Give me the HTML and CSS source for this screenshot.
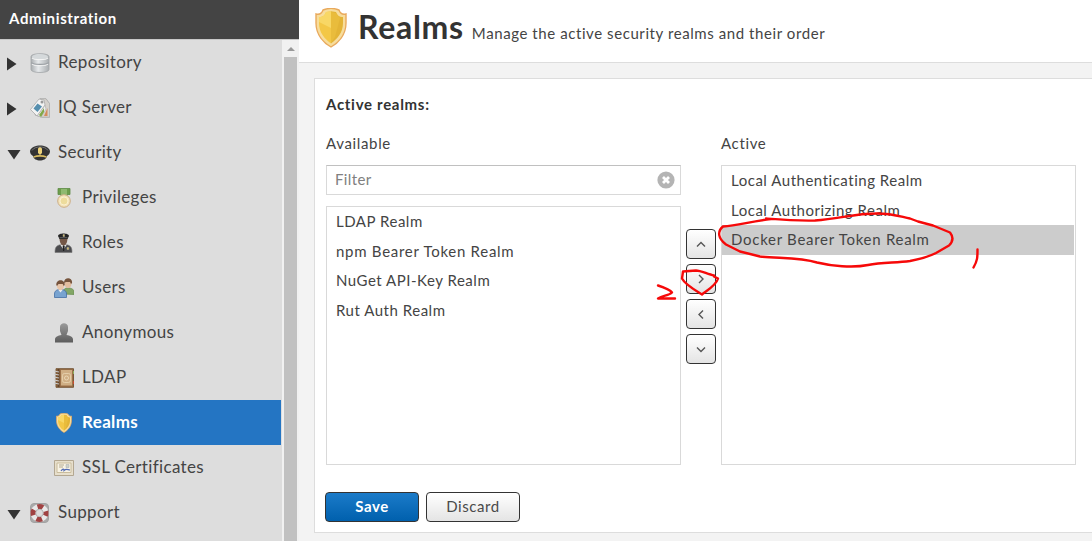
FILE: index.html
```html
<!DOCTYPE html>
<html lang="en">
<head>
<meta charset="utf-8">
<title>Realms</title>
<link rel="stylesheet" href="styles.css">
</head>
<body>
<svg class="defs" width="0" height="0" aria-hidden="true">
  <defs>
    <linearGradient id="metal" x1="0" x2="1"><stop offset="0" stop-color="#a9adb0"/><stop offset=".4" stop-color="#e6e9eb"/><stop offset="1" stop-color="#a9adb0"/></linearGradient>
    <linearGradient id="grey" x1="0" x2="0" y1="0" y2="1"><stop offset="0" stop-color="#9a9a9a"/><stop offset="1" stop-color="#5c5c5c"/></linearGradient>
    <symbol id="shield" viewBox="0 0 32 40">
      <path d="M16 39C9 35 1 27 1 15V6c4 1 6-1 7-4 5-2 11-2 16 0 1 3 3 5 7 4v9c0 12-8 20-15 24z" fill="#f7dd9c" stroke="#e9a95c" stroke-width="1.4"/>
      <path d="M16 35.500C10 31 4 25 4 15V9c4 0 6-2 7-5l5-.7z" fill="#f3c746"/>
      <path d="M16 35.500c6-4.500 12-10.500 12-20.500V9c-4 0-6-2-7-5l-5-.7z" fill="#e3b436"/>
      <path d="M16 3.300V20L4 14V9c4 0 6-2 7-5z" fill="#f8d765"/>
      <path d="M16 35V4l5 1 4 5-5 19z" fill="#e9bc3c"/>
    </symbol>
  </defs>
</svg>
<div class="app">
  <aside class="sidebar">
    <div class="sidebar-head">Administration</div>
    <div class="sidebar-body">
      <nav class="tree">
        <div class="node"><svg class="arrow" viewBox="0 0 14 14"><path d="M0 .5 9.500 7 0 13.500z"/></svg>
          <svg class="icon" viewBox="0 0 20 20"><path d="M1 3.500C1-.3 19-.3 19 3.500v13c0 4-18 4-18 0z" fill="url(#metal)" stroke="#a2a6a8" stroke-width=".8"/><ellipse cx="10" cy="3.700" rx="8" ry="2.500" fill="#d5d9db"/><path d="M1.500 9.500c1.500 2.400 15.500 2.400 17 0" fill="none" stroke="#9a9fa3" stroke-width="1.200"/><path d="M2 11c2 2.400 14 2.400 16 0M2 4.800c2 2.300 14 2.300 16 0" fill="none" stroke="#f4f4f4" stroke-width="1.100"/></svg>
          <span>Repository</span></div>
        <div class="node"><svg class="arrow" viewBox="0 0 14 14"><path d="M0 .5 9.500 7 0 13.500z"/></svg>
          <svg class="icon" viewBox="0 0 20 20"><path d="M10 .7h6l3.700 5v13.600h-8L5 17z" fill="#d5d1cc" stroke="#a5a5a5" stroke-width=".8"/><path d="M14 18l3.500-8v8z" fill="#d58a5b"/><path d="M7 17.500 15 7l1 4-5 8z" fill="#eee" stroke="#aaa" stroke-width=".6"/><path d="m9 17 5-7v4l-3 5z" fill="#82a948"/><path d="M.5 11.500 9 1l5 1 1 5-8 11z" fill="#f3f3f3" stroke="#aaa" stroke-width=".8"/><path d="m3.500 10.500 4-5 4.500 3-4.500 5.500z" fill="#568fae"/><circle cx="12" cy="4" r="1.500" fill="#999"/></svg>
          <span>IQ Server</span></div>
        <div class="node"><svg class="arrow" viewBox="0 0 14 14"><path d="M.5 3h13L7 12.500z"/></svg>
          <svg class="icon" viewBox="0 0 20 20"><path d="M0 8C1 4 6 2.500 10 2.500S19 4 20 8c0 2-1 4-3 5-1 6-13 6-14 0C1 12 0 10 0 8z" fill="#333"/><path d="M2 7.500C4 4.500 7 4 10 4s6 .5 8 3.500" fill="none" stroke="#777" stroke-width="1"/><path d="M3.500 13.300c4-1.600 9-1.600 13 0v1.500c-4-1.500-9-1.500-13 0z" fill="#d9bd60"/><path d="M8 5.500 10 4l2 1.500v4.500L10 12l-2-2z" fill="#ecd27a"/></svg>
          <span>Security</span></div>
        <div class="node child"><svg class="icon" viewBox="0 0 20 20"><path d="M4 .5h12v6h-3v3H7v-3H4z" fill="#6c9d4b" stroke="#5e8c45" stroke-width=".8"/><path d="M7 1h6v6H7z" fill="#8fb970"/><circle cx="10" cy="13" r="6.300" fill="#f3e3b8" stroke="#cdae87"/><circle cx="10" cy="13" r="4" fill="#eddc9c" stroke="#faf0d1"/></svg>
          <span>Privileges</span></div>
        <div class="node child"><svg class="icon" viewBox="0 0 20 20"><path d="M1 19.500c0-5 1-7 6-8h5c5 1 6 3 6 8z" fill="#4b4b4e" stroke="#777" stroke-width=".6"/><path d="m6 11.500 3.500 5 3.500-5z" fill="#e8e8e8"/><path d="m8.700 13 1-1 1 1-.5 5H9z" fill="#222"/><path d="M5.500 5h8c0 4-1.500 7.500-4 7.500S5.500 9 5.500 5z" fill="#745747"/><path d="M4 3c0-3.500 11-3.500 11 0l-1.500 3h-8z" fill="#252525"/><path d="M5.500 4.700h8M9 1.500h1.500v2H9zM13 14.500h1.800v2H13z" fill="#d8bb54" stroke="#bbb" stroke-width=".4"/></svg>
          <span>Roles</span></div>
        <div class="node child"><svg class="icon" viewBox="0 0 20 20"><path d="M9 16c0-5 2-6 5-6s6 1 6 4v2.500z" fill="#83a766" stroke="#658b4d" stroke-width=".7"/><ellipse cx="14" cy="5.500" rx="3.500" ry="4.700" fill="#e2bd9f"/><path d="M10 5c-.5-6.500 9-6.500 8 0l-1 1-1-2h-4z" fill="#75533c"/><path d="M.5 19.500V16c0-3 2-4.500 6-4.500s6 1.500 6 4.500v3.500z" fill="#78a3d0" stroke="#426fa4" stroke-width=".8"/><path d="m4 11.500 2.500 3 2.500-3z" fill="#eee"/><ellipse cx="6.500" cy="7.500" rx="3.700" ry="4.700" fill="#e8c5a9"/><path d="M2.300 7c-.5-6.500 9-6.500 8.400 0l-1 1-1-2H4.500L3 8z" fill="#75533c"/></svg>
          <span>Users</span></div>
        <div class="node child"><svg class="icon" viewBox="0 0 20 20"><path d="M1 19.500v-3c0-3 3-3.700 6.500-4.500L6 8V4c0-5 8-5 8 0v4l-1.500 4c3.500.8 6.500 1.500 6.500 4.500v3z" fill="url(#grey)"/></svg>
          <span>Anonymous</span></div>
        <div class="node child"><svg class="icon" viewBox="0 0 20 20"><path d="M2 .7h17.500v18.600H2z" fill="#9b7048" stroke="#70502f" stroke-width=".9"/><path d="M7 2h11v15.500H7z" fill="#cfae84"/><path d="M4.500 1v18" stroke="#60452d" stroke-width="2"/><path d="M0 3l5 1M0 6l5 1M0 9l5 1M0 12l5 1M0 15l5 1" stroke="#ccc" stroke-width="1"/><rect x="8.500" y="5.500" width="8" height="9" rx="2" fill="none" stroke="#ead6b4" stroke-width=".8"/><circle cx="12.500" cy="10" r="2" fill="none" stroke="#ead6b4"/><path d="M19.500 3v3" stroke="#8db05d"/><path d="M19.500 13v3" stroke="#c94a2e"/></svg>
          <span>LDAP</span></div>
        <div class="node child selected"><svg class="icon shield-small"><use href="#shield"/></svg>
          <span>Realms</span></div>
        <div class="node child"><svg class="icon" viewBox="0 0 20 20"><path d="M.5 2.500h19v15H.5z" fill="#e7dfcc" stroke="#b3a791"/><path d="M3 5h14v9.500H3z" fill="#f8f3e5" stroke="#c9bc9d"/><path d="M5 7h5M5 9h4" stroke="#b4aa90"/><path d="M12 6.500h3v3h-3z" fill="#cbd2cc" stroke="#aaa" stroke-width=".5"/><path d="M7 13c2-3 3-2 3-.5 2-2 3-1 6-.5" fill="none" stroke="#526bb5" stroke-width="1.200"/></svg>
          <span>SSL Certificates</span></div>
        <div class="node"><svg class="arrow" viewBox="0 0 14 14"><path d="M.5 3h13L7 12.500z"/></svg>
          <svg class="icon" viewBox="0 0 20 20"><rect x=".5" y=".5" width="18" height="19" rx="3.500" fill="#aaa" stroke="#a2a2a2"/><circle cx="9.500" cy="10" r="6.500" fill="none" stroke="#e9e9e9" stroke-width="5"/><circle cx="9.500" cy="10" r="6.500" fill="none" stroke="#a04343" stroke-width="5" stroke-dasharray="5.700 4.510" stroke-dashoffset="2.850"/><circle cx="9.500" cy="10" r="3.700" fill="#ddd" stroke="#aaa" stroke-width=".6"/></svg>
          <span>Support</span></div>
      </nav>
      <div class="scrollbar"><div class="scroll-up"></div><div class="thumb"></div></div>
    </div>
  </aside>
  <main class="main">
    <header class="page-head">
      <svg class="shield-large"><use href="#shield"/></svg>
      <h1>Realms</h1>
      <span class="subtitle">Manage the active security realms and their order</span>
    </header>
    <section class="panel">
      <div class="field-label">Active realms:</div>
      <div class="selector">
        <div class="column">
          <div class="column-title">Available</div>
          <div class="filter"><span>Filter</span>
            <svg width="18" height="18" viewBox="0 0 18 18"><circle cx="9" cy="9" r="8.600" fill="#b4b4b4"/><path d="m6 6 6 6m0-6-6 6" stroke="#fff" stroke-width="2.800"/></svg></div>
          <div class="list">
            <div class="item">LDAP Realm</div>
            <div class="item wide">npm Bearer Token Realm</div>
            <div class="item">NuGet API-Key Realm</div>
            <div class="item">Rut Auth Realm</div>
          </div>
        </div>
        <div class="movers">
          <button class="btn mover" aria-label="Move up"><svg viewBox="0 0 12 12"><path d="m2 8.500 4-4 4 4"/></svg></button>
          <button class="btn mover" aria-label="Add"><svg viewBox="0 0 12 12"><path d="m4 2 4 4-4 4"/></svg></button>
          <button class="btn mover" aria-label="Remove"><svg viewBox="0 0 12 12"><path d="M8 2.500 4 6.500l4 4"/></svg></button>
          <button class="btn mover" aria-label="Move down"><svg viewBox="0 0 12 12"><path d="m2 4.500 4 4 4-4"/></svg></button>
        </div>
        <div class="column">
          <div class="column-title">Active</div>
          <div class="list">
            <div class="item">Local Authenticating Realm</div>
            <div class="item">Local Authorizing Realm</div>
            <div class="item wide picked">Docker Bearer Token Realm</div>
          </div>
        </div>
      </div>
      <div class="actions">
        <button class="btn primary">Save</button>
        <button class="btn">Discard</button>
      </div>
    </section>
  </main>
</div>
<svg class="marks" viewBox="0 0 1092 541">
  <path d="M766 218.500C785 220 797 221 815 220.500 840 219 853 213.500 877 213.500c15 0 23 3 33 5l8 3 15 4 17 7c4 5 3 9-1 13l-13 7.500c-8 4-15 6-26 8-15 2-28 1-42 4-15 3-37 1-51-2.500-17-5-37-4-57-6l-20-5-14-7c-8-6-9-13-3-18 15-1 27-5 48-7.500"/>
  <path d="m977.500 249.500c0 8 0 11-4 18"/>
  <path d="M714 275.500c-6-1-13-5-18-5l-13 1-1 7c3 6 12 11 20 16 5-4 14-9 16-16l-4-2"/>
  <path d="M658 285.500c6 2 12 4 14 7-3 3-9 3-14 6h17"/>
</svg>
</body>
</html>
```
FILE: styles.css
```css
* { box-sizing: border-box; }
body {
  margin: 0;
  width: 1092px;
  height: 541px;
  overflow: hidden;
  position: relative;
  background: #f3f3f3;
  color: #333;
  font-family: Lato, "Open Sans", sans-serif;
  font-size: 15px;
}
.defs { display: block; position: absolute; }
.app { display: flex; height: 541px; }

.sidebar { width: 299px; flex: none; display: flex; flex-direction: column; }
.sidebar-head {
  height: 39px;
  flex: none;
  padding-left: 9px;
  line-height: 37px;
  background: #444;
  color: #fff;
  font-weight: 700;
  letter-spacing: .62px;
}
.sidebar-body { flex: 1; display: flex; border-top: 1px solid #c8c8c8; min-height: 0; }
.tree { width: 282px; padding-right: 1px; background: #ddd; overflow: hidden; }
.node {
  display: flex;
  align-items: center;
  height: 45px;
  padding-left: 7px;
  color: #444;
  font-size: 17px;
  letter-spacing: .35px;
}
.node span { padding-bottom: 2px; }
.node.child { padding-left: 54px; }
.node.selected { background: #2475c3; color: #fff; font-weight: 700; }
.arrow { width: 14px; height: 14px; margin-right: 9px; margin-top: 2px; fill: #333; }
.icon { width: 20px; height: 20px; margin-right: 8px; flex: none; }
.shield-small { padding: 0 1px; }
.scrollbar { width: 17px; background: #f1f1f1; padding: 0 2px; display: flex; flex-direction: column; align-items: center; }
.scroll-up { margin: 7px 0 6px; border: 4px solid transparent; border-top: 0; border-bottom: 4px solid #999; }
.thumb { width: 13px; flex: 1; background: #c1c1c1; }

.main { flex: 1; min-width: 0; }
.page-head {
  height: 63px;
  display: flex;
  align-items: baseline;
  padding-left: 15px;
  background: #fff;
  border-bottom: 1px solid #ddd;
}
.shield-large { width: 34px; height: 40px; margin-right: 10px; align-self: flex-start; margin-top: 8px; }
h1 { margin: 0; font-size: 32px; line-height: 54px; letter-spacing: .7px; }
.subtitle { margin-left: 8px; letter-spacing: .58px; color: #444; }
.panel {
  margin: 15px 0 0 15px;
  height: 455px;
  padding: 0 11px;
  background: #fff;
  border: 1px solid #ddd;
  border-right: 0;
}
.field-label { height: 44px; line-height: 50px; font-weight: 700; letter-spacing: .7px; }
.selector { display: flex; }
.column { width: 355px; height: 342px; display: flex; flex-direction: column; }
.column-title { height: 42px; flex: none; line-height: 40px; letter-spacing: .65px; color: #444; }
.filter {
  height: 30px;
  flex: none;
  display: flex;
  align-items: center;
  justify-content: space-between;
  padding: 0 5px 0 8px;
  margin-bottom: 11px;
  border: 1px solid #d9d9d9;
  border-top-color: #c0c0c0;
  color: #808080;
  letter-spacing: .4px;
}
.filter span { padding-bottom: 2px; }
.list { flex: 1; border: 1px solid #d9d9d9; padding-right: 1px; }
.item { height: 29.5px; line-height: 28px; padding-left: 9px; letter-spacing: .52px; color: #444; }
.item.wide { letter-spacing: .72px; }
.picked { background: #ccc; }
.movers { width: 40px; padding-top: 106px; display: flex; flex-direction: column; align-items: center; gap: 5px; }
.btn {
  width: 94px;
  height: 30px;
  padding: 0 0 2px;
  border: 1px solid #333;
  border-radius: 4px;
  background: linear-gradient(#fff, #e4e4e4);
  color: #4a4a4a;
  font: 15px Lato, sans-serif;
  letter-spacing: .6px;
}
.mover { width: 30px; padding: 0; display: grid; place-items: center; }
.mover svg { width: 12px; height: 12px; fill: none; stroke: #555; stroke-width: 1.4; }
.actions { display: flex; gap: 7px; margin: 27px 0 0 -1px; }
.btn.primary { background: linear-gradient(#1b7bc9, #0060ad); color: #fff; font-weight: 700; }
.marks {
  position: absolute;
  left: 0;
  top: 0;
  width: 1092px;
  height: 541px;
  fill: none;
  stroke: #f60909;
  stroke-width: 2.4;
  stroke-linecap: round;
  stroke-linejoin: round;
  pointer-events: none;
}
```
